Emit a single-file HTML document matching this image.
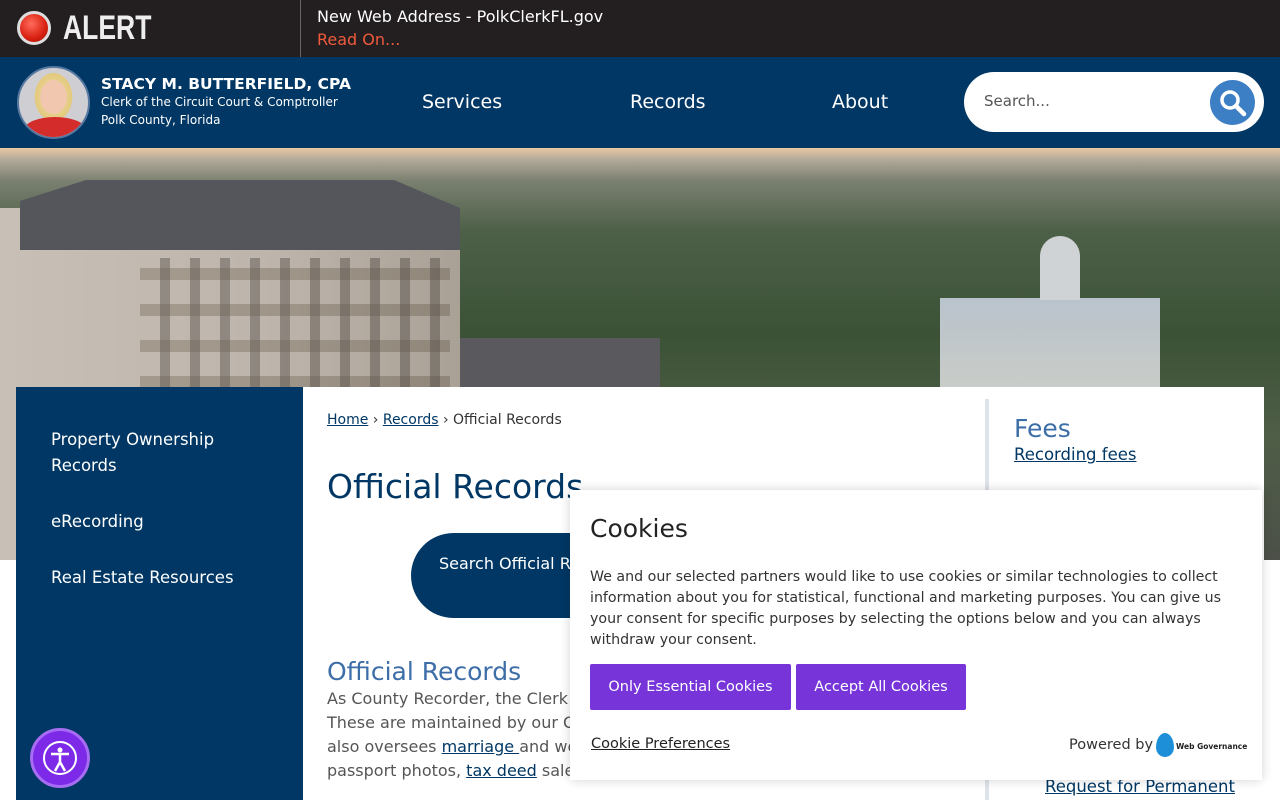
<!DOCTYPE html>
<html><head><meta charset="utf-8"><style>
*{margin:0;padding:0;box-sizing:border-box}
body{width:1280px;height:800px;overflow:hidden;font-family:"DejaVu Sans","Liberation Sans",sans-serif;background:#fff;position:relative}
.alert{position:absolute;left:0;top:0;width:1280px;height:57px;background:#231f20}
.alert .dot{position:absolute;left:17px;top:11px;width:34px;height:34px;border-radius:50%;background:radial-gradient(circle at 40% 35%,#ff6b5b,#d81f10 60%,#9c1208);border:3px solid #ddd}
.alert .t{position:absolute;left:63px;top:9px;color:#eee;font:bold 34px "Liberation Sans",sans-serif;transform:scaleX(.78);transform-origin:left}
.alert .sep{position:absolute;left:300px;top:0;width:1px;height:57px;background:#666}
.alert .m{position:absolute;left:317px;top:7px;color:#fff;font-size:16px}
.alert .r{position:absolute;left:317px;top:30px;color:#f05a3c;font-size:16px}
.hdr{position:absolute;left:0;top:57px;width:1280px;height:91px;background:#003764}
.av{position:absolute;left:17px;top:9px;width:73px;height:73px;border-radius:50%;border:2px solid #5577a0;background:radial-gradient(ellipse 22px 28px at 50% 42%,#f1c7b0 60%,#e6cf8a 61%,#e3c97e 85%,transparent 86%),#cfcfd3;overflow:hidden}
.av:after{content:"";position:absolute;left:5px;bottom:-6px;width:62px;height:26px;border-radius:50% 50% 0 0;background:#d42b2b}
.name{position:absolute;left:101px;top:18px;color:#fff;font-weight:bold;font-size:15.5px}
.sub{position:absolute;left:101px;color:#fff;font-size:12px}
.nav{position:absolute;top:34px;color:#fff;font-size:19px}
.search{position:absolute;left:964px;top:15px;width:300px;height:60px;background:#fff;border-radius:30px}
.search span{position:absolute;left:20px;top:20px;font-size:15px;color:#555}
.search .b{position:absolute;right:9px;top:8px;width:45px;height:45px;border-radius:50%;background:#3d7fc4}
.hero{position:absolute;left:0;top:148px;width:1280px;height:412px;background:linear-gradient(180deg,#e8c9a4 0,#b0a898 3%,#7a8070 8%,#4d6048 20%,#3b5236 45%,#4f5e47 70%,#4c5048 100%)}
.bld{position:absolute;left:0;top:60px;width:460px;height:352px;background:linear-gradient(90deg,#c8c0b6,#bdb5ab 60%,#a9a196)}
.roof{position:absolute;left:20px;top:32px;width:440px;height:70px;background:#55565c;clip-path:polygon(0 30%,15% 0,85% 0,100% 40%,100% 100%,0 100%)}
.win{position:absolute;left:140px;top:110px;width:310px;height:130px;background:repeating-linear-gradient(90deg,transparent 0 20px,rgba(60,55,50,.55) 20px 30px),repeating-linear-gradient(0deg,#bdb5ab 0 12px,transparent 12px 36px);mix-blend-mode:multiply;opacity:.6}
.low{position:absolute;left:460px;top:190px;width:200px;height:50px;background:#5a5a5e}
.ct{position:absolute;left:940px;top:150px;width:220px;height:90px;background:linear-gradient(#b9c3cc,#c9ccc8)}
.dome{position:absolute;left:1040px;top:88px;width:40px;height:64px;background:#cfd3d5;border-radius:20px 20px 0 0}
.side{position:absolute;left:16px;top:387px;width:287px;height:413px;background:#003764}
.side a{position:absolute;left:35px;color:#fff;font-size:16.5px;line-height:26px;text-decoration:none}
.main{position:absolute;left:303px;top:387px;width:961px;height:413px;background:#fff}
.crumb{position:absolute;left:24px;top:25px;font-size:14px;color:#333}
.crumb u{color:#003764}
h1{position:absolute;left:24px;top:80px;font-weight:normal;font-size:33px;color:#003764}
.sbtn{position:absolute;left:108px;top:146px;width:330px;height:85px;border-radius:43px;background:#003764;color:#fff;font-size:16px;padding:21px 28px}
h2{position:absolute;left:24px;top:270px;font-weight:normal;font-size:25px;color:#3d6ea8}
.p{position:absolute;left:24px;top:300px;font-size:16px;line-height:24px;color:#555;width:260px}
.p u{color:#003764}
.rdiv{position:absolute;left:682px;top:12px;width:4px;height:401px;background:#dfe3ea}
.fees{position:absolute;left:711px;top:27px;font-size:25px;color:#3d6ea8}
.rf{position:absolute;left:711px;top:58px;font-size:16.5px;color:#003764;text-decoration:underline}
.rp{position:absolute;left:742px;top:390px;font-size:16.5px;color:#003764;text-decoration:underline}
.ck{position:absolute;left:570px;top:490px;width:692px;height:290px;background:#fff;box-shadow:0 0 10px rgba(0,0,0,.18);color:#222}
.ck h3{position:absolute;left:20px;top:24px;font-weight:normal;font-size:25px}
.ck p{position:absolute;left:20px;top:77px;width:650px;font-size:14.2px;line-height:21px;color:#333}
.pb{position:absolute;top:174px;height:46px;background:#7634d9;color:#fff;font-size:14.5px;text-align:center;line-height:46px;border-radius:2px}
.pref{position:absolute;left:21px;top:246px;font-size:14.5px;text-decoration:underline}
.pow{position:absolute;left:499px;top:247px;font-size:14.5px;color:#333}
.drop{position:absolute;left:586px;top:243px;width:18px;height:24px;background:#1d8fd8;border-radius:50% 50% 50% 50%/60% 60% 40% 40%}
.wg{position:absolute;left:606px;top:252px;font-size:7.5px;font-weight:bold}
.acc{position:absolute;left:30px;top:728px;width:60px;height:60px;border-radius:50%;background:#7d2ae8;border:3px solid #a66cf2}
</style></head><body>
<div class="alert"><div class="dot"></div><div class="t">ALERT</div><div class="sep"></div><div class="m">New Web Address - PolkClerkFL.gov</div><div class="r">Read On...</div></div>
<div class="hdr"><div class="av"></div>
<div class="name">STACY M. BUTTERFIELD, CPA</div>
<div class="sub" style="top:38px">Clerk of the Circuit Court &amp; Comptroller</div>
<div class="sub" style="top:56px">Polk County, Florida</div>
<div class="nav" style="left:422px">Services</div><div class="nav" style="left:630px">Records</div><div class="nav" style="left:832px">About</div>
<div class="search"><span>Search...</span><div class="b"><svg width="45" height="45"><circle cx="20" cy="20" r="8" stroke="#fff" stroke-width="3.5" fill="none"/><path d="M26 26l8 8" stroke="#fff" stroke-width="4.5" stroke-linecap="round"/></svg></div></div></div>
<div class="hero"><div class="bld"></div><div class="roof"></div><div class="win"></div><div class="low"></div><div class="ct"></div><div class="dome"></div></div>
<div class="side"><a style="top:40px">Property Ownership<br>Records</a><a style="top:122px">eRecording</a><a style="top:178px">Real Estate Resources</a></div>
<div class="main">
<div class="crumb"><u>Home</u> › <u>Records</u> › Official Records</div>
<h1>Official Records</h1>
<div class="sbtn">Search Official Records</div>
<h2>Official Records</h2>
<div class="p">As County Recorder, the Clerk These are maintained by our C also oversees <u>marriage </u>and we passport photos, <u>tax deed</u> sale</div>
<div class="rdiv"></div><div class="fees">Fees</div><div class="rf">Recording fees</div><div class="rp">Request for Permanent</div>
</div>
<div class="ck"><h3>Cookies</h3>
<p>We and our selected partners would like to use cookies or similar technologies to collect information about you for statistical, functional and marketing purposes. You can give us your consent for specific purposes by selecting the options below and you can always withdraw your consent.</p>
<div class="pb" style="left:20px;width:201px">Only Essential Cookies</div>
<div class="pb" style="left:226px;width:170px">Accept All Cookies</div>
<div class="pref">Cookie Preferences</div><div class="pow">Powered by</div><div class="drop"></div><div class="wg">Web Governance</div></div>
<div class="acc"><svg width="54" height="54"><circle cx="27" cy="27" r="16" stroke="#fff" stroke-width="2" fill="none"/><circle cx="27" cy="19" r="2.5" fill="#fff"/><path d="M18 23h18M27 23v8l-5 9M27 31l5 9" stroke="#fff" stroke-width="2.5" fill="none"/></svg></div>
</body></html>
